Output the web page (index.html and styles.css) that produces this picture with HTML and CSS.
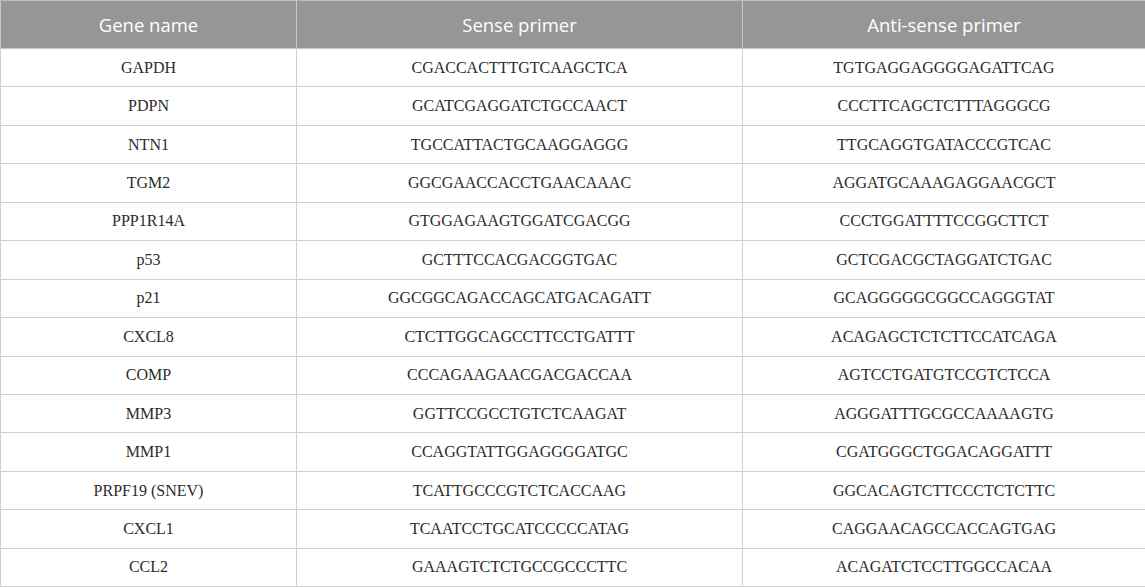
FILE: index.html
```html
<!DOCTYPE html>
<html>
<head>
<meta charset="utf-8">
<link rel="stylesheet" href="styles.css">
</head>
<body>
<table class="primers">
  <colgroup>
    <col class="c1">
    <col class="c2">
    <col class="c3">
  </colgroup>
  <thead>
    <tr class="head-row">
      <th>Gene name</th>
      <th>Sense primer</th>
      <th>Anti-sense primer</th>
    </tr>
  </thead>
  <tbody>
    <tr><td>GAPDH</td><td>CGACCACTTTGTCAAGCTCA</td><td>TGTGAGGAGGGGAGATTCAG</td></tr>
    <tr><td>PDPN</td><td>GCATCGAGGATCTGCCAACT</td><td>CCCTTCAGCTCTTTAGGGCG</td></tr>
    <tr><td>NTN1</td><td>TGCCATTACTGCAAGGAGGG</td><td>TTGCAGGTGATACCCGTCAC</td></tr>
    <tr><td>TGM2</td><td>GGCGAACCACCTGAACAAAC</td><td>AGGATGCAAAGAGGAACGCT</td></tr>
    <tr><td>PPP1R14A</td><td>GTGGAGAAGTGGATCGACGG</td><td>CCCTGGATTTTCCGGCTTCT</td></tr>
    <tr><td>p53</td><td>GCTTTCCACGACGGTGAC</td><td>GCTCGACGCTAGGATCTGAC</td></tr>
    <tr><td>p21</td><td>GGCGGCAGACCAGCATGACAGATT</td><td>GCAGGGGGCGGCCAGGGTAT</td></tr>
    <tr><td>CXCL8</td><td>CTCTTGGCAGCCTTCCTGATTT</td><td>ACAGAGCTCTCTTCCATCAGA</td></tr>
    <tr><td>COMP</td><td>CCCAGAAGAACGACGACCAA</td><td>AGTCCTGATGTCCGTCTCCA</td></tr>
    <tr><td>MMP3</td><td>GGTTCCGCCTGTCTCAAGAT</td><td>AGGGATTTGCGCCAAAAGTG</td></tr>
    <tr><td>MMP1</td><td>CCAGGTATTGGAGGGGATGC</td><td>CGATGGGCTGGACAGGATTT</td></tr>
    <tr><td>PRPF19 (SNEV)</td><td>TCATTGCCCGTCTCACCAAG</td><td>GGCACAGTCTTCCCTCTCTTC</td></tr>
    <tr><td>CXCL1</td><td>TCAATCCTGCATCCCCCATAG</td><td>CAGGAACAGCCACCAGTGAG</td></tr>
    <tr><td>CCL2</td><td>GAAAGTCTCTGCCGCCCTTC</td><td>ACAGATCTCCTTGGCCACAA</td></tr>
  </tbody>
</table>
</body>
</html>
```

FILE: styles.css
```css
html, body {
  margin: 0;
  padding: 0;
  background: #ffffff;
}

.primers {
  width: 1145px;
  border-collapse: collapse;
  table-layout: fixed;
}

.c1 { width: 296px; }
.c2 { width: 446px; }
.c3 { width: 403px; }

.primers th {
  height: 47px;
  padding: 0;
  background: #969696;
  color: #ffffff;
  font-family: "Open Sans", "Noto Sans", sans-serif;
  font-weight: 400;
  font-size: 18.5px;
  text-align: center;
  vertical-align: middle;
  border: 1px solid #c8c8c8;
  border-top-color: #bdbdbd;
}

.primers td {
  height: 37.45px;
  padding: 0;
  font-family: "Liberation Serif", "Times New Roman", serif;
  font-size: 16px;
  color: #2b2b2b;
  text-align: center;
  vertical-align: middle;
  border: 1px solid #d0d0d0;
}
```
